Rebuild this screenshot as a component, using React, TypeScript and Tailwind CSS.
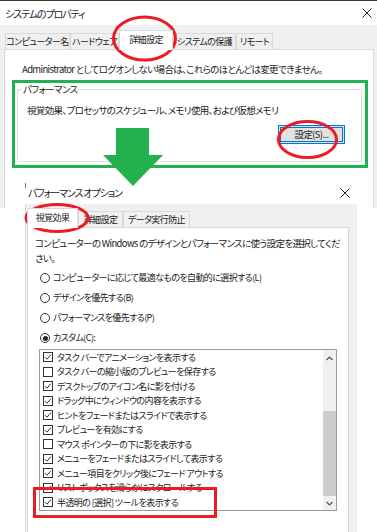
import React from 'react';

const font = "font-['Noto_Sans_CJK_JP',sans-serif] [font-feature-settings:'palt']";

const effects: [string, boolean][] = [
  ['タスク バーでアニメーションを表示する', true],
  ['タスク バーの縮小版のプレビューを保存する', false],
  ['デスクトップのアイコン名に影を付ける', true],
  ['ドラッグ中にウィンドウの内容を表示する', true],
  ['ヒントをフェードまたはスライドで表示する', true],
  ['プレビューを有効にする', true],
  ['マウス ポインターの下に影を表示する', false],
  ['メニューをフェードまたはスライドして表示する', true],
  ['メニュー項目をクリック後にフェード アウトする', true],
  ['リスト ボックスを滑らかにスクロールする', true],
  ['半透明の [選択] ツールを表示する', true],
];

const CloseX = () => (
  <svg width="10" height="10" viewBox="0 0 10 10">
    <path d="M0.5 0.5 L9.5 9.5 M9.5 0.5 L0.5 9.5" stroke="#222" strokeWidth="1" />
  </svg>
);

const Tab = ({ label, w, active }: { label: string; w: string; active?: boolean }) => (
  <div
    className={`${w} flex items-center justify-center whitespace-nowrap overflow-hidden text-[9px] tracking-[-0.6px] border border-[#d9d9d9] border-b-0 ${
      active ? 'h-[20px] bg-white relative z-10 -mb-px pb-[2px]' : 'h-[16px] bg-[#f0f0f0]'
    }`}
  >
    {label}
  </div>
);

const Check = ({ on }: { on: boolean }) => (
  <div className="w-[10px] h-[10px] border border-[#333] bg-white flex items-center justify-center shrink-0">
    {on && (
      <svg width="8" height="8" viewBox="0 0 8 8">
        <path d="M1 4.2 L3 6.2 L7 1.6" stroke="#333" strokeWidth="1" fill="none" />
      </svg>
    )}
  </div>
);

const Radio = ({ on, label }: { on?: boolean; label: string }) => (
  <div className="h-[20px] flex items-center gap-[3px]">
    <div className="w-[10px] h-[10px] rounded-full border border-[#333] bg-white flex items-center justify-center">
      {on && <div className="w-[5px] h-[5px] rounded-full bg-[#222]" />}
    </div>
    <span className="text-[9px] tracking-[-0.6px]">{label}</span>
  </div>
);

const SystemProperties = () => (
  <div className="h-[208px] bg-[#f0f0f0] border-t border-[#3d3d2b] overflow-hidden flex flex-col">
    <div className="h-[24px] bg-white flex items-center justify-between pl-[5px] pr-[5px] text-[10px] tracking-[-1.1px] text-[#222]">
      <span>システムのプロパティ</span>
      <CloseX />
    </div>
    <div className="flex-1 flex flex-col pl-[4px] pr-[3px] pt-[5px]">
      <div className="flex items-end pl-px">
        <Tab label="コンピューター名" w="w-[65px]" />
        <Tab label="ハードウェア" w="w-[49px]" />
        <Tab label="詳細設定" w="w-[54px]" active />
        <Tab label="システムの保護" w="w-[63px]" />
        <Tab label="リモート" w="w-[37px]" />
      </div>
      <div className="flex-1 bg-white border border-[#d9d9d9] border-b-0">
        <p className="pl-[17px] pt-[12px] leading-[14px] whitespace-nowrap">
          Administrator としてログオンしない場合は、これらのほとんどは変更できません。
        </p>
        <div className="relative ml-[12px] mr-[11px] mt-[13px] h-[73px] border border-[#dcdcdc] flex flex-col">
          <span className="absolute -top-[8px] left-[4px] bg-white px-px leading-[14px]">パフォーマンス</span>
          <p className="pl-[9px] pt-[13px] leading-[14px] whitespace-nowrap">
            視覚効果、プロセッサのスケジュール、メモリ使用、および仮想メモリ
          </p>
          <div className="flex justify-end pr-[16px] pt-[8px]">
            <div className="w-[67px] h-[19px] border border-[#0078d7] bg-[#e1e1e1] flex items-center justify-center">
              <div className="w-[63px] h-[15px] border border-[#0078d7] flex items-center justify-center">設定(S)...</div>
            </div>
          </div>
        </div>
      </div>
    </div>
  </div>
);

const PerformanceOptions = () => (
  <div className="absolute left-[25px] top-[181px] w-[332px] bottom-0 flex flex-col">
    <div className="relative h-[23px] bg-white flex items-center justify-between pl-[3px] pr-[7px] text-[10px] tracking-[-1.1px] text-[#222]">
      <div className="absolute left-0 top-[2px] w-px h-[5px] bg-[#777]" />
      <span>パフォーマンス オプション</span>
      <CloseX />
    </div>
    <div className="flex-1 flex flex-col bg-[#f0f0f0] border-l border-[#dadada] pl-px pr-[8px] pt-[4px]">
      <div className="flex items-end">
        <Tab label="視覚効果" w="w-[51px]" active />
        <Tab label="詳細設定" w="w-[45px]" />
        <Tab label="データ実行防止" w="w-[67px]" />
      </div>
      <div className="flex-1 bg-white border border-[#d9d9d9] border-b-0">
        <div className="pl-[7px] pt-[8px] leading-[14.5px] whitespace-nowrap">
          <div>コンピューターの Windows のデザインとパフォーマンスに使う設定を選択してくだ</div>
          <div>さい。</div>
        </div>
        <div className="pl-[12px] pt-[3px]">
          <Radio label="コンピューターに応じて最適なものを自動的に選択する(L)" />
          <Radio label="デザインを優先する(B)" />
          <Radio label="パフォーマンスを優先する(P)" />
          <Radio label="カスタム(C):" on />
        </div>
        <div className="ml-[11px] mt-px w-[298px] h-[162px] border border-[#9a9a9a] flex">
          <div className="flex-1 pl-[3px] text-[9px] tracking-[-0.6px]">
            {effects.map(([label, on]) => (
              <div key={label} className="h-[14.5px] flex items-center gap-[4px] whitespace-nowrap">
                <Check on={on} />
                <span>{label}</span>
              </div>
            ))}
          </div>
          <div className="w-[13px] bg-[#f0f0f0] flex flex-col">
            <div className="h-[17px] flex items-center justify-center">
              <svg width="7" height="5" viewBox="0 0 7 5">
                <path d="M0.5 4 L3.5 1 L6.5 4" stroke="#555" strokeWidth="1.2" fill="none" />
              </svg>
            </div>
            <div className="h-[44px]" />
            <div className="h-[85px] bg-[#cdcdcd]" />
            <div className="flex-1 flex items-center justify-center">
              <svg width="7" height="5" viewBox="0 0 7 5">
                <path d="M0.5 1 L3.5 4 L6.5 1" stroke="#555" strokeWidth="1.2" fill="none" />
              </svg>
            </div>
          </div>
        </div>
      </div>
    </div>
  </div>
);

const Annotations = () => (
  <svg className="absolute inset-0 pointer-events-none" width="377" height="532" viewBox="0 0 377 532">
    <ellipse cx="144.5" cy="38.5" rx="31" ry="21.5" fill="none" stroke="#ed1c24" strokeWidth="3" />
    <rect x="13.5" y="81.5" width="353" height="85" fill="none" stroke="#22b14c" strokeWidth="3" />
    <ellipse cx="307.5" cy="139.5" rx="29" ry="18" fill="none" stroke="#ed1c24" strokeWidth="3" />
    <polygon points="116,128 149,128 149,155 163,155 133,186 103,155 116,155" fill="#22b14c" />
    <ellipse cx="57" cy="218" rx="31" ry="13.5" fill="none" stroke="#ed1c24" strokeWidth="3" />
    <rect x="34.5" y="488.5" width="181" height="28" fill="none" stroke="#ec1c24" strokeWidth="3" />
  </svg>
);

export default function App() {
  return (
    <div className={`relative w-[377px] h-[532px] overflow-hidden bg-white text-[9.5px] tracking-[-0.65px] text-[#1a1a1a] ${font}`}>
      <SystemProperties />
      <PerformanceOptions />
      <Annotations />
    </div>
  );
}
